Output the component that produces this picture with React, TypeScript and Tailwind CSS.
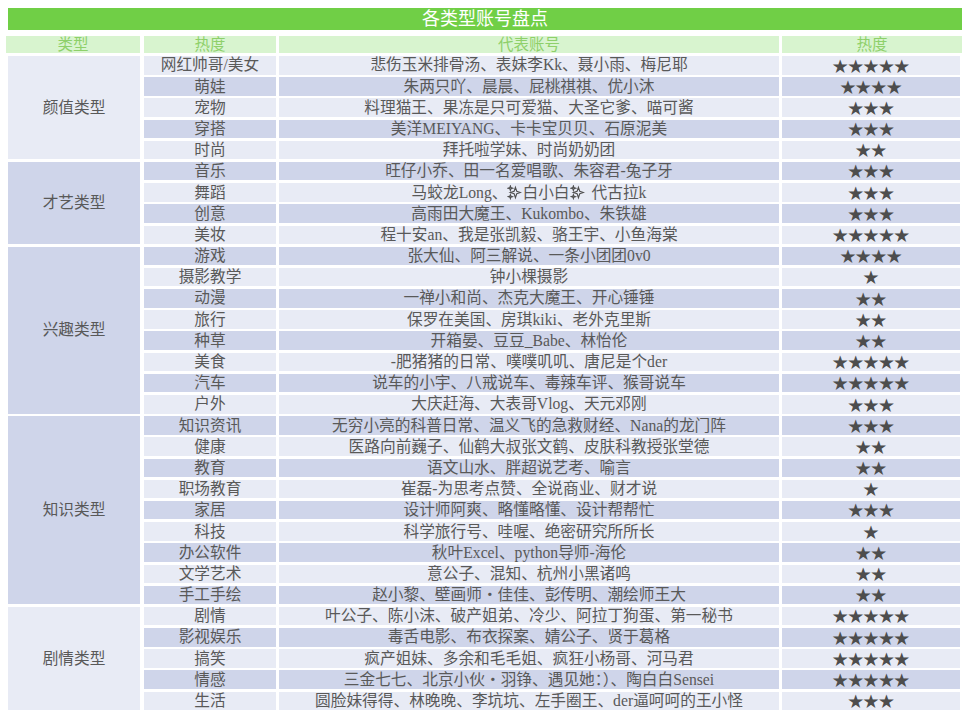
type Row = [string, string, number];

const groups: { name: string; rows: Row[] }[] = [
  {
    name: "颜值类型",
    rows: [
      ["网红帅哥/美女", "悲伤玉米排骨汤、表妹李Kk、聂小雨、梅尼耶", 5],
      ["萌娃", "朱两只吖、晨晨、屁桃祺祺、优小沐", 4],
      ["宠物", "料理猫王、果冻是只可爱猫、大圣它爹、喵可酱", 3],
      ["穿搭", "美洋MEIYANG、卡卡宝贝贝、石原泥美", 3],
      ["时尚", "拜托啦学妹、时尚奶奶团", 2],
    ],
  },
  {
    name: "才艺类型",
    rows: [
      ["音乐", "旺仔小乔、田一名爱唱歌、朱容君-兔子牙", 3],
      ["舞蹈", "马蛟龙Long、✨白小白✨ 代古拉k", 3],
      ["创意", "高雨田大魔王、Kukombo、朱铁雄", 3],
      ["美妆", "程十安an、我是张凯毅、骆王宇、小鱼海棠", 5],
    ],
  },
  {
    name: "兴趣类型",
    rows: [
      ["游戏", "张大仙、阿三解说、一条小团团0v0", 4],
      ["摄影教学", "钟小棵摄影", 1],
      ["动漫", "一禅小和尚、杰克大魔王、开心锤锤", 2],
      ["旅行", "保罗在美国、房琪kiki、老外克里斯", 2],
      ["种草", "开箱晏、豆豆_Babe、林怡伦", 2],
      ["美食", "-肥猪猪的日常、噗噗叽叽、唐尼是个der", 5],
      ["汽车", "说车的小宇、八戒说车、毒辣车评、猴哥说车", 5],
      ["户外", "大庆赶海、大表哥Vlog、天元邓刚", 3],
    ],
  },
  {
    name: "知识类型",
    rows: [
      ["知识资讯", "无穷小亮的科普日常、温义飞的急救财经、Nana的龙门阵", 3],
      ["健康", "医路向前巍子、仙鹤大叔张文鹤、皮肤科教授张堂德", 2],
      ["教育", "语文山水、胖超说艺考、喻言", 2],
      ["职场教育", "崔磊-为思考点赞、全说商业、财才说", 1],
      ["家居", "设计师阿爽、略懂略懂、设计帮帮忙", 3],
      ["科技", "科学旅行号、哇喔、绝密研究所所长", 1],
      ["办公软件", "秋叶Excel、python导师-海伦", 2],
      ["文学艺术", "意公子、混知、杭州小黑诸鸣", 2],
      ["手工手绘", "赵小黎、壁画师・佳佳、彭传明、潮绘师王大", 2],
    ],
  },
  {
    name: "剧情类型",
    rows: [
      ["剧情", "叶公子、陈小沫、破产姐弟、冷少、阿拉丁狗蛋、第一秘书", 5],
      ["影视娱乐", "毒舌电影、布衣探案、婧公子、贤于葛格", 5],
      ["搞笑", "疯产姐妹、多余和毛毛姐、疯狂小杨哥、河马君", 5],
      ["情感", "三金七七、北京小伙・羽铮、遇见她：）、陶白白Sensei", 5],
      ["生活", "圆脸妹得得、林晚晚、李坑坑、左手圈王、der逼呵呵的王小怪", 3],
    ],
  },
];

const spanClass: Record<number, string> = {
  4: "row-span-4",
  5: "row-span-5",
  8: "row-span-8",
  9: "row-span-9",
};

const light = "bg-[#e8ebf5]";
const dark = "bg-[#cfd5ea]";

const font = "font-['Liberation_Serif','Noto_Sans_CJK_SC',serif]";

// monochrome sparkles glyph
const Sparkle = () => (
  <svg viewBox="0 0 16 16" className="w-[15px] h-[15px] shrink-0" fill="none" stroke="#505050" strokeWidth="1.2">
    <path d="M9 2.5 L10.4 6.6 L14.5 8 L10.4 9.4 L9 13.5 L7.6 9.4 L3.5 8 L7.6 6.6 Z" />
    <path d="M3.6 1 L4.2 2.8 L6 3.4 L4.2 4 L3.6 5.8 L3 4 L1.2 3.4 L3 2.8 Z" />
    <path d="M3.6 10.4 L4.1 11.9 L5.6 12.4 L4.1 12.9 L3.6 14.4 L3.1 12.9 L1.6 12.4 L3.1 11.9 Z" />
  </svg>
);

const renderText = (s: string) =>
  s.split("✨").flatMap((part, i) =>
    i === 0
      ? [part]
      : [<Sparkle key={i} />, part.startsWith(" ") ? <span key={`p${i}`} className="ml-[7px]">{part.trim()}</span> : part]
  );

export default function App() {
  let idx = 0;
  const cells: React.ReactNode[] = [];
  groups.forEach((g) => {
    const startBg = idx % 2 === 0 ? light : dark;
    cells.push(
      <div
        key={g.name}
        className={`col-start-1 w-[132px] flex items-center justify-center ${spanClass[g.rows.length]} ${startBg}`}
      >
        {g.name}
      </div>
    );
    g.rows.forEach(([cat, accounts, stars]) => {
      const bg = idx % 2 === 0 ? light : dark;
      cells.push(
        <div key={`c${idx}`} className={`col-start-2 flex items-center justify-center ${bg}`}>
          {cat}
        </div>,
        <div key={`a${idx}`} className={`col-start-3 flex items-center justify-center whitespace-nowrap ${bg}`}>
          {renderText(accounts)}
        </div>,
        <div
          key={`s${idx}`}
          className={`col-start-4 flex items-center justify-center text-[#4d4d4d] font-['Noto_Sans_CJK_SC',sans-serif] text-[15.4px] ${bg}`}
        >
          {"★".repeat(stars)}
        </div>
      );
      idx++;
    });
  });

  return (
    <div className={`w-[969px] h-[721px] bg-white overflow-hidden ${font} text-[15.7px] leading-none text-[#595959]`}>
      {/* 标题 */}
      <div className="ml-[8px] mt-[8px] w-[954px] h-[22px] bg-[#70cf46] text-white text-[18px] flex items-center justify-center">
        各类型账号盘点
      </div>

      {/* 表头 */}
      <div className="mt-[6px] ml-[6px] flex h-[17px] text-[#8ed06a] text-[15.5px]">
        <div className="w-[134px] bg-[#d8f4cf] flex items-center justify-center">类型</div>
        <div className="ml-[4px] w-[132px] bg-[#d8f4cf] flex items-center justify-center">热度</div>
        <div className="ml-[3px] w-[500px] bg-[#d8f4cf] flex items-center justify-center">代表账号</div>
        <div className="ml-[3px] w-[180px] bg-[#d8f4cf] flex items-center justify-center">热度</div>
      </div>

      {/* 数据 */}
      <div className="mt-[3px] ml-[8px] grid grid-cols-[133px_132px_500px_178px] gap-x-[3px] gap-y-[2.7px] grid-rows-[repeat(31,18.5px)]">
        {cells}
      </div>
    </div>
  );
}
